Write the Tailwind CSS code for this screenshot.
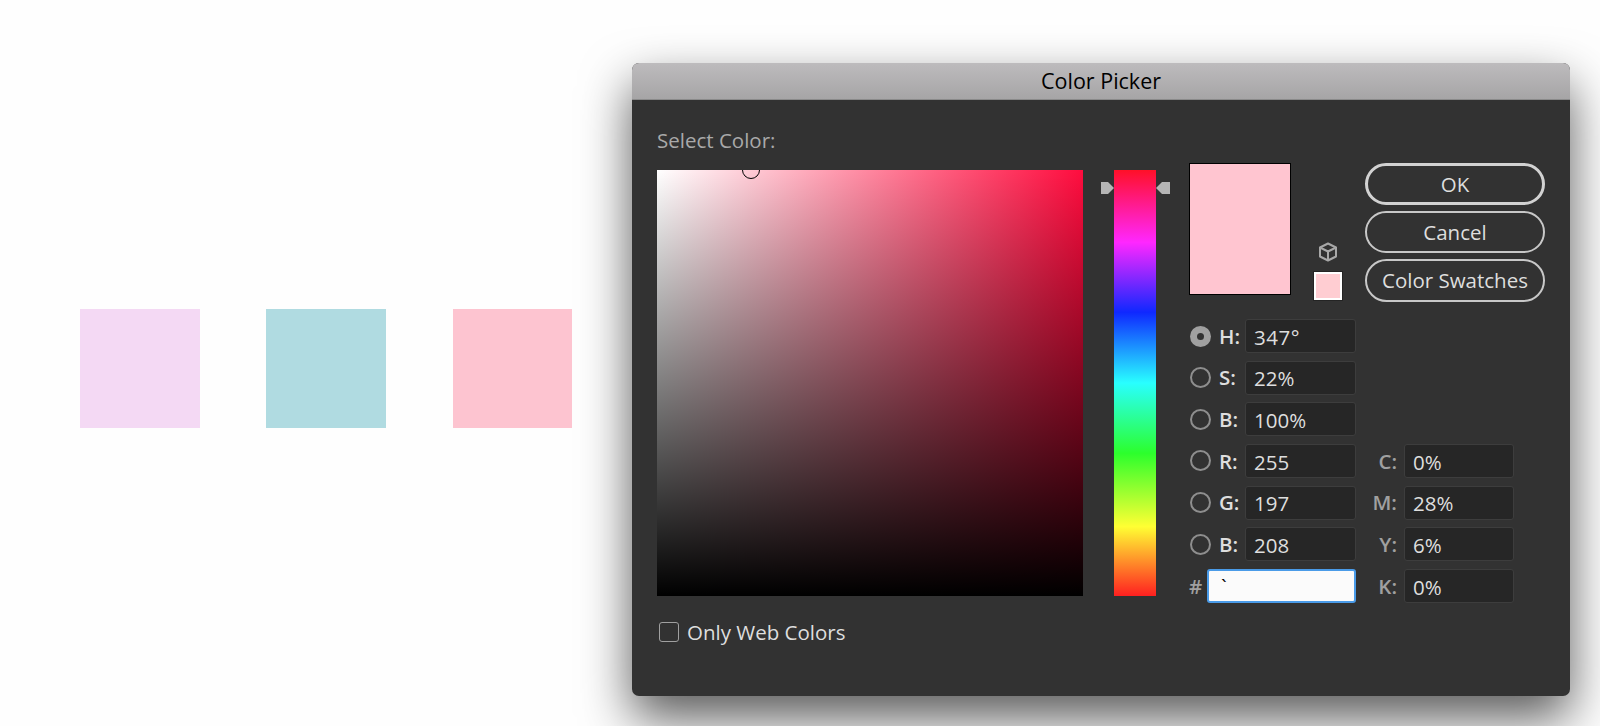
<!DOCTYPE html>
<html lang="en">
<head>
  <meta charset="UTF-8" />
  <meta name="viewport" content="width=device-width, initial-scale=1" />
  <title>Color Picker</title>
  <script src="https://cdn.jsdelivr.net/npm/@tailwindcss/browser@4"></script>
</head>
<body class="bg-[#fefefe] font-['Open_Sans',sans-serif] text-[#dedede] overflow-hidden">
  <div class="w-[1600px] h-[726px] flex items-start overflow-hidden">

    <!-- Swatches on the artboard -->
    <div class="flex gap-[66.75px] pl-[80px] pt-[309px]">
      <div class="w-[119.5px] h-[119px] bg-[#f4d9f4]"></div>
      <div class="w-[119.5px] h-[119px] bg-[#b0dbe1]"></div>
      <div class="w-[119.5px] h-[119px] bg-[#fdc4d0]"></div>
    </div>

    <!-- Dialog -->
    <div class="ml-[60px] mt-[63px] w-[938px] h-[633px] shrink-0 rounded-[7px] bg-[#323232] overflow-hidden shadow-[0_22px_50px_rgba(0,0,0,0.65)]">
      <div class="h-[37px] flex items-center justify-center bg-[linear-gradient(to_bottom,#bdbbbd,#a6a5a6)] border-b border-[#8a8a8a] text-black text-[21.5px]">Color Picker</div>

      <div class="flex pl-[25px]">
        <!-- Field -->
        <div class="w-[426px]">
          <div class="h-[24px] mt-[28px] mb-[18px] flex items-center text-[20.5px] font-medium text-[#a9a9a9]">Select Color:</div>
          <div class="relative h-[426px] overflow-hidden bg-[linear-gradient(to_top,#000,transparent),linear-gradient(to_right,#fff,#ff0c3e)]">
            <div class="absolute left-[85px] top-[-9px] w-[18px] h-[18px] rounded-full border border-black"></div>
          </div>
          <div class="mt-[26px] ml-[2px] flex items-center gap-[8px]">
            <div class="w-[20px] h-[20px] rounded-[3px] border border-[#a0a0a0]"></div>
            <span class="text-[20.5px] leading-[20px] font-medium">Only Web Colors</span>
          </div>
        </div>

        <!-- Hue slider -->
        <div class="relative ml-[31px] mt-[70px] w-[42px] h-[426px] bg-[linear-gradient(to_bottom,#ff1028_0%,#ff27ff_17%,#0f28ff_33.4%,#29ffff_50%,#2cff2c_66.5%,#ffff33_83.7%,#ff2020_100%)]">
          <svg class="absolute left-[-13px] top-[12px]" width="13" height="12" viewBox="0 0 13 12"><polygon points="0,0 7,0 13,6 7,12 0,12" fill="#b5b5b5" /></svg>
          <svg class="absolute right-[-14px] top-[12px]" width="14" height="12" viewBox="0 0 14 12"><polygon points="14,0 6,0 0,6 6,12 14,12" fill="#b5b5b5" /></svg>
        </div>

        <!-- Right column -->
        <div class="ml-[33px] mt-[63px] w-[356px]">
          <div class="flex items-start">
            <div class="w-[102px] h-[132px] bg-[#ffc5d0] border-[1.5px] border-black"></div>
            <div class="w-[51px] ml-[11px] pt-[79px] flex flex-col items-start">
              <svg class="ml-[16px]" width="20" height="20" viewBox="0 0 20 20" fill="none" stroke="#a8a8a8" stroke-width="2" stroke-linejoin="round"><path d="M10 1.5 18 5.5V14.5L10 18.5 2 14.5V5.5Z" /><path d="M2 5.5 10 9.5 18 5.5M10 9.5V18.5" /></svg>
              <div class="ml-[12px] mt-[10px] w-[28px] h-[28px] bg-[#ffcdd2] border-2 border-white shadow-[0_0_0_1px_#242424]"></div>
            </div>
            <div class="ml-[12px] w-[180px] flex flex-col font-medium">
              <div class="h-[42px] rounded-full border-[3px] border-[#d2d2d2] flex items-center justify-center text-[20.5px]">OK</div>
              <div class="h-[42px] mt-[6px] rounded-full border-2 border-[#c8c8c8] flex items-center justify-center text-[20.5px]">Cancel</div>
              <div class="h-[43px] mt-[6px] rounded-full border-2 border-[#c8c8c8] flex items-center justify-center text-[20.5px]">Color Swatches</div>
            </div>
          </div>

          <!-- Numeric fields -->
          <div class="mt-[17px] grid grid-cols-[167px_158px] grid-rows-[repeat(7,34px)] gap-y-[7.67px] text-[20.5px]">
            <div class="flex items-center">
              <div class="w-[21px] h-[21px] ml-[1px] rounded-full bg-[#a0a0a0] flex items-center justify-center"><div class="w-[7px] h-[7px] rounded-full bg-[#323232]"></div></div>
              <span class="ml-[8px] w-[26px] font-semibold">H:</span>
              <div class="w-[111px] h-[34px] px-[8px] pt-[2px] flex items-center rounded-[3px] bg-[#262626] border border-[#3d3d3d] tracking-[0.5px]">347°</div>
            </div>
            <div class="flex items-center justify-end"></div>

            <div class="flex items-center">
              <div class="w-[21px] h-[21px] ml-[1px] rounded-full border-2 border-[#8e8e8e]"></div>
              <span class="ml-[8px] w-[26px] font-semibold">S:</span>
              <div class="w-[111px] h-[34px] px-[8px] pt-[2px] flex items-center rounded-[3px] bg-[#262626] border border-[#3d3d3d]">22%</div>
            </div>
            <div></div>

            <div class="flex items-center">
              <div class="w-[21px] h-[21px] ml-[1px] rounded-full border-2 border-[#8e8e8e]"></div>
              <span class="ml-[8px] w-[26px] font-semibold">B:</span>
              <div class="w-[111px] h-[34px] px-[8px] pt-[2px] flex items-center rounded-[3px] bg-[#262626] border border-[#3d3d3d]">100%</div>
            </div>
            <div></div>

            <div class="flex items-center">
              <div class="w-[21px] h-[21px] ml-[1px] rounded-full border-2 border-[#8e8e8e]"></div>
              <span class="ml-[8px] w-[26px] font-semibold">R:</span>
              <div class="w-[111px] h-[34px] px-[8px] pt-[2px] flex items-center rounded-[3px] bg-[#262626] border border-[#3d3d3d]">255</div>
            </div>
            <div class="flex items-center justify-end">
              <span class="mr-[7px] font-semibold text-[#a0a0a0]">C:</span>
              <div class="w-[110px] h-[34px] px-[8px] pt-[2px] flex items-center rounded-[3px] bg-[#262626] border border-[#3d3d3d]">0%</div>
            </div>

            <div class="flex items-center">
              <div class="w-[21px] h-[21px] ml-[1px] rounded-full border-2 border-[#8e8e8e]"></div>
              <span class="ml-[8px] w-[26px] font-semibold">G:</span>
              <div class="w-[111px] h-[34px] px-[8px] pt-[2px] flex items-center rounded-[3px] bg-[#262626] border border-[#3d3d3d]">197</div>
            </div>
            <div class="flex items-center justify-end">
              <span class="mr-[7px] font-semibold text-[#a0a0a0]">M:</span>
              <div class="w-[110px] h-[34px] px-[8px] pt-[2px] flex items-center rounded-[3px] bg-[#262626] border border-[#3d3d3d]">28%</div>
            </div>

            <div class="flex items-center">
              <div class="w-[21px] h-[21px] ml-[1px] rounded-full border-2 border-[#8e8e8e]"></div>
              <span class="ml-[8px] w-[26px] font-semibold">B:</span>
              <div class="w-[111px] h-[34px] px-[8px] pt-[2px] flex items-center rounded-[3px] bg-[#262626] border border-[#3d3d3d]">208</div>
            </div>
            <div class="flex items-center justify-end">
              <span class="mr-[7px] font-semibold text-[#a0a0a0]">Y:</span>
              <div class="w-[110px] h-[34px] px-[8px] pt-[2px] flex items-center rounded-[3px] bg-[#262626] border border-[#3d3d3d]">6%</div>
            </div>

            <div class="flex items-center">
              <span class="w-[18px] text-[#a0a0a0] font-semibold">#</span>
              <div class="w-[149px] h-[34px] pl-[12px] flex items-center rounded-[3px] bg-[#fbfbfb] border-2 border-[#4a9be8] text-black">`</div>
            </div>
            <div class="flex items-center justify-end">
              <span class="mr-[7px] font-semibold text-[#a0a0a0]">K:</span>
              <div class="w-[110px] h-[34px] px-[8px] pt-[2px] flex items-center rounded-[3px] bg-[#262626] border border-[#3d3d3d]">0%</div>
            </div>
          </div>
        </div>
      </div>
    </div>
  </div>
</body>
</html>
